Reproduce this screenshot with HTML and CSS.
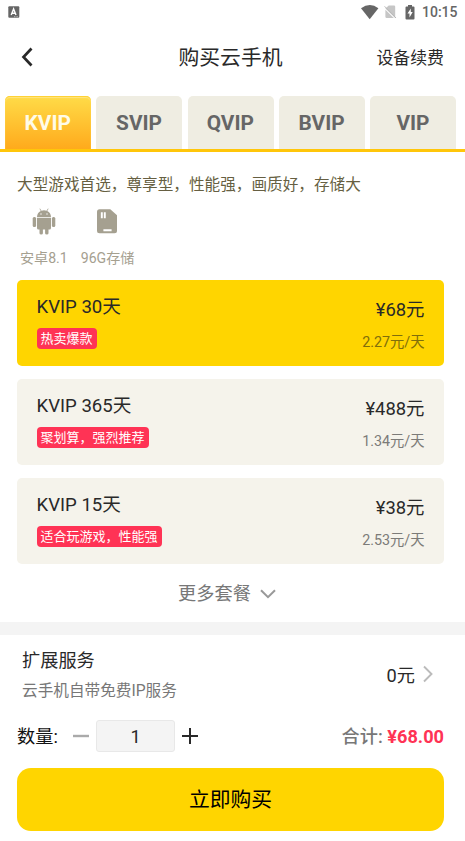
FILE: index.html
```
<!DOCTYPE html>
<html lang="zh-CN">
<head>
<meta charset="utf-8">
<title>购买云手机</title>
<link rel="stylesheet" href="styles.css">
</head>
<body>
<div class="status">
  <svg class="status-app" width="12" height="12" viewBox="0 0 12 12"><rect x=".3" y=".3" width="11" height="11.4" rx="1" fill="#666"/><path d="M3.2 9 5.6 3 8 9M4 7.2h3.2" fill="none" stroke="#fff" stroke-width="1.4"/><path d="M6 10.7h4" stroke="#ccc" stroke-width=".8" stroke-dasharray="1 .6"/></svg>
  <svg class="status-wifi" width="18" height="15" viewBox="0 0 18 15"><path d="M0 3.2Q9-3 17.4 3.2L8.7 14.3Z" fill="#666"/></svg>
  <svg class="status-sim" width="13" height="14" viewBox="0 0 13 14"><path d="M4.7.5H10q1.2 0 1.2 1.2V13L1.4 3.4Z" fill="#c6c6c6"/><path d="M1.4 4.7 9.8 13H2.6q-1.2 0-1.2-1.2Z" fill="#c6c6c6"/><path d="M.6 1.3 12 13" stroke="#b8b8b8" stroke-width="1"/></svg>
  <svg class="status-battery" width="10" height="15" viewBox="0 0 10 15"><path d="M3 0h4v1.4h1.5q1 0 1 1v11q0 1-1 1h-7q-1 0-1-1v-11q0-1 1-1H3Z" fill="#666"/><path d="M5.8 3.4 2.5 8.5h2v3.9l3.2-5.3H5.8Z" fill="#fff"/></svg>
  <span class="clock">10:15</span>
</div>
<header class="header">
  <svg class="back" width="12" height="20" viewBox="0 0 12 20"><path d="M10.5 1.5 2.5 10l8 8.5" fill="none" stroke="#292929" stroke-width="2.7"/></svg>
  <h1 class="title">购买云手机</h1>
  <a class="renew">设备续费</a>
</header>
<nav class="tabs">
  <div class="tab tab-active">KVIP</div>
  <div class="tab">SVIP</div>
  <div class="tab">QVIP</div>
  <div class="tab">BVIP</div>
  <div class="tab">VIP</div>
</nav>
<main class="plans">
  <p class="desc">大型游戏首选，尊享型，性能强，画质好，存储大</p>
  <div class="specs">
    <div class="spec">
      <svg width="24" height="27" viewBox="0 0 24 27" fill="#a5a090"><path d="M5 9Q5.2 4.7 8.8 3L7.4.7 8 .4l1.5 2.3q2.5-.9 5 0L16 .4l.6.3L15.2 3Q18.8 4.7 19 9Z"/><circle cx="9" cy="6" r=".7" fill="#fff"/><circle cx="15" cy="6" r=".7" fill="#fff"/><path d="M5 9.7h14v10.2q0 1.5-1.5 1.5h-11Q5 21.4 5 19.9Z"/><rect x=".7" y="9" width="3.4" height="10" rx="1.5"/><rect x="19.9" y="9" width="3.4" height="10" rx="1.5"/><path d="M7.5 20h3.4v5.2q0 1.4-1.7 1.4t-1.7-1.4ZM13.1 20h3.4v5.2q0 1.4-1.7 1.4t-1.7-1.4Z"/></svg>
      <span>安卓8.1</span>
    </div>
    <div class="spec spec-storage">
      <svg width="24" height="27" viewBox="0 0 24 27"><path d="M4.5 1.2h10.8L22 7.2v15.5q0 2.500-2.500 2.500h-15Q2 25.200 2 22.700V3.700q0-2.500 2.500-2.500Z" fill="#a5a090"/><path d="M6.8 4.3v5.9M9.8 4.3v5.9M8.4 22.3h8.2" stroke="#fff" stroke-width="1.9"/></svg>
      <span>96G存储</span>
    </div>
  </div>
  <section class="card card-active">
    <div class="card-main"><div class="name">KVIP 30天</div><span class="badge">热卖爆款</span></div>
    <div class="card-cost"><div class="price">¥68元</div><div class="daily">2.27元/天</div></div>
  </section>
  <section class="card">
    <div class="card-main"><div class="name">KVIP 365天</div><span class="badge">聚划算，强烈推荐</span></div>
    <div class="card-cost"><div class="price">¥488元</div><div class="daily">1.34元/天</div></div>
  </section>
  <section class="card">
    <div class="card-main"><div class="name">KVIP 15天</div><span class="badge">适合玩游戏，性能强</span></div>
    <div class="card-cost"><div class="price">¥38元</div><div class="daily">2.53元/天</div></div>
  </section>
  <div class="more">更多套餐<svg width="16" height="10" viewBox="0 0 16 10"><path d="M1 1.2 8 8.2l7-7" fill="none" stroke="#999" stroke-width="2"/></svg></div>
</main>
<section class="extra">
  <div>
    <div class="extra-title">扩展服务</div>
    <div class="extra-sub">云手机自带免费IP服务</div>
  </div>
  <div class="extra-cost">0元<svg width="10" height="18" viewBox="0 0 10 18"><path d="M1 1.5 8.5 9 1 16.5" fill="none" stroke="#bbb" stroke-width="1.9"/></svg></div>
</section>
<section class="order">
  <span class="qty-label">数量:</span>
  <svg class="minus" width="16" height="16" viewBox="0 0 16 16"><path d="M0 8h16" stroke="#aaa" stroke-width="2.4"/></svg>
  <span class="qty">1</span>
  <svg class="plus" width="16" height="16" viewBox="0 0 16 16"><path d="M0 8h16M8 0v16" stroke="#292929" stroke-width="2"/></svg>
  <span class="total">合计: <b>¥68.00</b></span>
</section>
<button class="buy">立即购买</button>
</body>
</html>
```
FILE: styles.css
```
* { box-sizing: border-box; }
body {
  margin: 0;
  height: 841px;
  overflow: hidden;
  background: #fff;
  color: #292929;
  font-family: Roboto, "Noto Sans CJK SC", sans-serif;
  font-size: 18.2px;
}
svg { display: block; flex: none; }
.status { display: flex; align-items: center; height: 24px; padding: 0 8px; color: #666; }
.status-app { margin-right: auto; }
.status-wifi { margin-right: 5px; }
.status-sim { margin-right: 8px; }
.status-battery { margin-right: 7px; }
.clock { width: 35px; font-size: 14px; font-weight: 500; line-height: 25px; }
.header { display: grid; grid-template-columns: 1fr auto 1fr; align-items: center; height: 67px; padding: 0 21px; }
.back { margin-bottom: 2px; }
.title { margin: 0; font-size: 20.8px; font-weight: 400; line-height: 30px; transform: translateX(-2px); }
.renew { justify-self: end; font-size: 16.9px; line-height: 26px; }
.tabs { display: flex; gap: 5.3px; height: 61px; padding: 5px 5px 0; border-bottom: 3px solid #ffc60a; }
.tab {
  width: 86px;
  height: 53px;
  border-radius: 5px 5px 0 0;
  background: #efede2;
  color: #666;
  font-size: 20.8px;
  font-weight: 700;
  line-height: 55px;
  text-align: center;
  text-indent: -.5px;
}
.tab-active { background: linear-gradient(#ffdc48, #ffaa1c); box-shadow: inset 0 1px 1px #ffd02c, inset 0 2px 1px #ffe78a; color: #fffbe8; }
.plans { height: 470px; padding: 21px 21px 0 17px; }
.desc { margin: 0; color: #665f42; font-size: 15.64px; line-height: 24px; white-space: nowrap; }
.specs { display: flex; gap: 13px; height: 83px; padding: 11px 0 0 3px; }
.spec { display: flex; flex-direction: column; align-items: center; gap: 13px; color: #a5a090; font-size: 14.1px; line-height: 20px; }
.spec-storage svg { margin-right: 1px; }
.card { display: flex; justify-content: space-between; height: 86px; margin-bottom: 13px; padding: 0 19.5px; border-radius: 5px; background: #f5f3eb; }
.card-active { background: #ffd500; }
.card-main { padding-top: 14px; }
.name { font-size: 18.6px; line-height: 26px; }
.badge { display: block; width: max-content; height: 21px; margin-top: 8px; padding: 0 4px; border-radius: 4px; background: #ff3355; color: #fff; font-size: 13px; line-height: 21px; }
.card-cost { padding-top: 17px; text-align: right; }
.price { font-size: 18.4px; line-height: 26px; }
.daily { margin-top: 8px; color: #7c7b78; font-size: 14.3px; line-height: 22px; }
.card-active .daily { color: #806e0b; }
.more { display: flex; align-items: center; justify-content: center; gap: 9px; margin-top: 16px; padding-right: 7px; color: #777; line-height: 28px; }
.extra { display: flex; justify-content: space-between; height: 98px; padding: 12px 32px 0 22px; border-top: 13px solid #f4f4f4; }
.extra-title { line-height: 28px; }
.extra-sub { margin-top: 5px; color: #777; font-size: 15.65px; line-height: 22px; }
.extra-cost { display: flex; align-items: center; gap: 8px; height: 28px; margin-top: 13px; }
.order { display: flex; align-items: center; height: 32px; padding: 0 21px 0 17px; }
.qty-label { width: 56px; padding-bottom: 2px; color: #111; }
.qty { width: 79px; height: 32px; margin: 0 7px; border: 1px solid #e8e8e8; border-radius: 3px; background: #f4f4f4; line-height: 31px; text-align: center; }
.total { margin-left: auto; padding-bottom: 2px; color: #777; font-weight: 500; }
.total b { color: #ff3355; font-weight: 700; }
.buy { display: block; width: 427px; height: 63px; margin: 16px 0 0 17px; padding: 1px 0 0; border: 0; border-radius: 14px; background: #ffd500; color: #000; font: inherit; font-size: 20.8px; line-height: 62px; }
```
